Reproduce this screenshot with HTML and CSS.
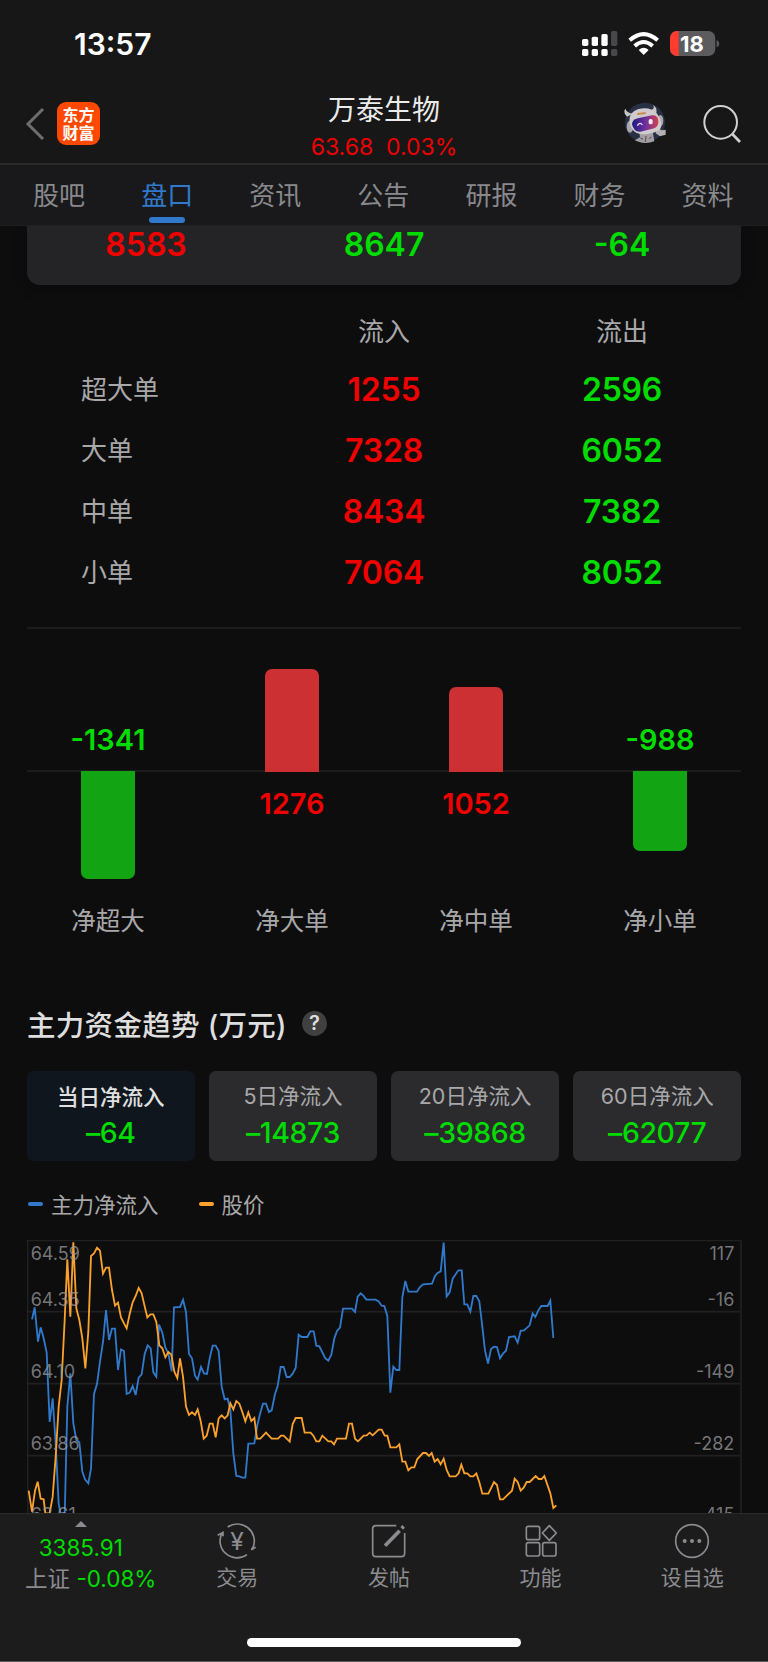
FILE: index.html
```html
<!DOCTYPE html>
<html lang="zh-CN">
<head>
<meta charset="UTF-8"/>
<title>万泰生物</title>
<link rel="stylesheet" href="styles.css">
</head>

<body>
<div class="page">
	<div class="status">
		<span class="time">13:57</span>
		<svg class="status-icons" viewBox="590 90 420 80">
			<g fill="#fff">
				<rect x="593" y="117" width="19" height="21" rx="5"/>
				<rect x="622" y="110" width="19" height="28" rx="5"/>
				<rect x="651" y="102" width="19" height="36" rx="5"/>
				<rect x="593" y="147" width="19" height="21" rx="5"/>
				<rect x="622" y="147" width="19" height="21" rx="5"/>
				<rect x="651" y="147" width="19" height="21" rx="5"/>
			</g>
			<g fill="#48484a">
				<rect x="680" y="93" width="19" height="45" rx="5"/>
				<rect x="680" y="147" width="19" height="21" rx="5"/>
			</g>
			<g fill="none" stroke="#fff" stroke-width="12">
				<path d="M736 121Q778 84 820 121"/>
				<path d="M751 138Q778 114 805 138"/>
			</g>
			<path fill="#fff" d="M763 150Q778 137 793 150L778 165Z"/>
			<rect x="857" y="93" width="136" height="75" rx="21" fill="#5c5c5e"/>
			<path fill="#ff3b30" d="M883 93H878A21 21 0 0 0 857 114V147A21 21 0 0 0 878 168H883Z"/>
			<path fill="#5c5c5e" d="M997 120Q1005 123 1005 131Q1005 139 997 142Z"/>
			<text class="battery" x="923" y="155" text-anchor="middle">18</text>
		</svg>
	</div>

	<div class="header">
		<svg class="back" viewBox="0 0 20 34"><path d="M18 2L3 17L18 32" fill="none" stroke="#6e6e70" stroke-width="3"/></svg>
		<div class="logo">东方<br/>财富</div>
		<div class="stock">
			<div class="stock-name">万泰生物</div>
			<div class="stock-price">63.68&nbsp; 0.03%</div>
		</div>
		<svg class="robot" viewBox="720 310 126 126">
			<circle cx="783" cy="372" r="60" fill="#273044"/>
			<path fill="#c9c4c5" d="M729 354Q716 342 724 330Q730 344 746 345ZM801 334Q814 331 807 320Q823 328 815 350Z"/>
			<path fill="#a39ea2" d="M766 400L806 398L811 428Q786 437 764 429L752 425L768 416Z"/>
			<path fill="#b5b0b4" d="M817 395L825 390L833 395L845 393V408L828 413L815 404Z"/>
			<ellipse cx="738" cy="384" rx="10" ry="18" fill="#aaa6ab"/>
			<ellipse cx="829" cy="366" rx="9" ry="17" fill="#aaa6ab"/>
			<path fill="#cfcacc" d="M736 370Q734 340 763 331Q800 322 820 346Q840 376 827 393Q806 407 771 407Q743 403 736 370Z"/>
			<path d="M760 346L785 343" stroke="#c98b50" stroke-width="6"/>
			<path fill="url(#visor)" d="M744 377Q744 364 761 359L804 350Q820 348 823 365Q825 384 811 389L769 399Q750 401 744 377Z"/>
			<path d="M760 381Q768 368 775 379" fill="none" stroke="#e8e4f4" stroke-width="4"/>
			<rect x="794" y="361" width="12" height="16" rx="5" fill="#f0e8f4"/>
			<path d="M786 412L784 430M769 418L777 422M801 414L796 421" stroke="#5a4f56" stroke-width="3"/>
			<defs>
				<linearGradient id="visor"><stop offset="0" stop-color="#1c1a7c"/><stop offset=".5" stop-color="#6d2fa0"/><stop offset="1" stop-color="#d4404f"/></linearGradient>
			</defs>
		</svg>
		<svg class="search" viewBox="950 305 126 126"><g fill="none" stroke="#d0d0d0" stroke-width="6"><circle cx="1009" cy="366" r="49"/><path d="M1044 401L1067 425" stroke-width="8"/></g></svg>
	</div>

	<ul class="tabs">
		<li>股吧</li>
		<li class="current">盘口</li>
		<li>资讯</li>
		<li>公告</li>
		<li>研报</li>
		<li>财务</li>
		<li>资料</li>
	</ul>

	<div class="content">
		<div class="total">
			<span class="red">8583</span>
			<span class="green">8647</span>
			<span class="green">-64</span>
		</div>

		<div class="flow">
			<div class="flow-row flow-head"><span></span><span>流入</span><span>流出</span></div>
			<div class="flow-row"><span class="name">超大单</span><b class="red">1255</b><b class="green">2596</b></div>
			<div class="flow-row"><span class="name">大单</span><b class="red">7328</b><b class="green">6052</b></div>
			<div class="flow-row"><span class="name">中单</span><b class="red">8434</b><b class="green">7382</b></div>
			<div class="flow-row"><span class="name">小单</span><b class="red">7064</b><b class="green">8052</b></div>
		</div>

		<div class="bars">
			<div class="half up">
				<div class="col"><b class="green">-1341</b></div>
				<div class="col"><i style="height:103px"></i></div>
				<div class="col"><i style="height:85px"></i></div>
				<div class="col"><b class="green">-988</b></div>
			</div>
			<div class="half down">
				<div class="col"><i style="height:108px"></i></div>
				<div class="col"><b class="red">1276</b></div>
				<div class="col"><b class="red">1052</b></div>
				<div class="col"><i style="height:80px"></i></div>
			</div>
			<div class="half names">
				<span>净超大</span><span>净大单</span><span>净中单</span><span>净小单</span>
			</div>
		</div>

		<div class="title">主力资金趋势 (万元)<span class="help">?</span></div>

		<div class="periods">
			<div class="period on"><span>当日净流入</span><em>–64</em></div>
			<div class="period"><span>5日净流入</span><em>–14873</em></div>
			<div class="period"><span>20日净流入</span><em>–39868</em></div>
			<div class="period"><span>60日净流入</span><em>–62077</em></div>
		</div>

		<div class="legend">
			<span class="main">主力净流入</span>
			<span class="price">股价</span>
		</div>

		<svg class="chart" viewBox="20 30 2145 819">
			<g class="grid">
				<path d="M21 31H2163M21 245H2163M21 461H2163M21 677H2163M22 30V849M2162 30V849"/>
			</g>
			<polyline class="line-main" points="35,268 43,232 53,335 61,292 70,325 79,368 88,576 97,505 106,640 115,820 122,860 133,860 141,530 150,430 159,580 168,630 177,637 186,725 194,748 204,760 212,716 221,492 230,462 239,395 248,336 257,240 266,330 275,296 284,296 293,420 302,358 311,363 319,492 328,488 337,468 346,495 355,443 364,433 373,372 382,346 391,355 399,427 408,440 416,284 426,308 435,352 444,370 454,424 461,232 479,231 488,209 497,246 506,372 515,385 524,437 532,449 542,411 551,430 560,432 568,385 577,347 586,347 595,363 604,470 613,508 622,506 630,540 639,670 648,738 657,739 666,743 675,743 684,641 702,640 711,585 720,548 728,521 737,521 746,546 754,541 764,492 772,468 781,411 790,411 799,441 808,441 817,431 826,414 835,314 844,321 861,321 870,304 880,304 888,347 897,349 915,385 924,392 933,374 942,325 950,303 959,293 968,236 995,236 1004,246 1012,200 1021,190 1029,197 1038,209 1066,209 1075,214 1084,227 1092,228 1101,258 1110,488 1119,410 1128,420 1137,420 1146,202 1155,153 1164,185 1190,185 1199,171 1208,163 1235,161 1244,138 1252,129 1261,124 1270,38 1279,199 1288,187 1297,146 1306,133 1314,121 1324,121 1332,223 1341,223 1350,245 1359,198 1368,198 1377,214 1386,290 1394,362 1403,401 1412,357 1421,350 1430,351 1439,385 1448,371 1457,362 1466,321 1483,319 1492,338 1501,302 1510,302 1528,286 1537,250 1545,261 1554,241 1563,228 1582,228 1590,212 1599,324"/>
			<polyline class="line-price" points="25,782 35,845 44,782 52,755 61,806 70,808 75,850 88,850 97,800 106,680 115,530 124,450 133,270 141,88 150,260 159,37 168,235 177,270 186,325 195,415 204,305 212,78 221,70 230,53 239,62 248,131 257,113 266,113 275,180 284,227 293,218 302,262 311,280 319,295 328,252 337,217 346,198 355,174 364,190 373,229 381,262 390,253 399,253 408,276 417,346 426,355 435,382 444,366 453,374 462,425 471,444 479,385 488,440 497,530 506,555 515,547 524,555 532,538 541,573 550,626 559,617 568,581 577,581 586,622 595,565 604,556 613,565 622,556 630,520 639,538 648,513 657,521 666,546 675,574 684,547 693,573 702,564 710,626 720,626 737,608 754,626 773,626 782,617 790,617 808,635 817,582 826,564 844,564 853,608 871,608 879,617 888,634 897,634 906,617 924,634 933,634 941,643 950,626 977,626 986,581 995,581 1004,626 1013,634 1030,617 1039,616 1048,608 1057,616 1075,599 1084,599 1093,617 1101,617 1110,652 1128,652 1137,643 1146,695 1155,695 1164,721 1173,712 1182,712 1191,687 1208,669 1217,669 1226,678 1234,669 1243,695 1252,687 1261,703 1270,686 1279,720 1288,739 1306,739 1315,730 1323,704 1332,730 1341,730 1350,739 1359,739 1368,730 1377,757 1386,791 1404,791 1421,756 1430,765 1439,808 1448,808 1475,782 1483,746 1492,756 1501,782 1510,773 1519,756 1528,756 1546,738 1555,747 1564,747 1572,738 1590,790 1599,834 1608,826"/>
			<g class="axis">
				<text x="31" y="89">64.59</text>
				<text x="31" y="229">64.35</text>
				<text x="31" y="444">64.10</text>
				<text x="31" y="659">63.86</text>
				<text x="31" y="874">63.61</text>
			</g>
			<g class="axis right">
				<text x="2142" y="89">117</text>
				<text x="2142" y="229">-16</text>
				<text x="2142" y="444">-149</text>
				<text x="2142" y="659">-282</text>
				<text x="2142" y="874">-415</text>
			</g>
		</svg>
	</div>

	<div class="footer">
		<div class="nav">
			<div class="index">
				<i class="arrow"></i>
				<div class="index-value">3385.91</div>
				<div class="index-name">上证 <span>-0.08%</span></div>
			</div>
			<div class="nav-item">
				<svg viewBox="0 0 126 126"><path d="M35 21A51 51 0 0 1 112 80L106 89L119 82M93 104A51 51 0 0 1 18 39M5 46L21 37V49"/><text x="63" y="89" text-anchor="middle">¥</text></svg>
				<span>交易</span>
			</div>
			<div class="nav-item">
				<svg viewBox="0 0 126 126"><path d="M85 17H24Q14 17 14 27V100Q14 110 24 110H100Q110 110 110 100V39"/><path class="pen" d="M51 77L95 32M101 25L107 19"/></svg>
				<span>发帖</span>
			</div>
			<div class="nav-item">
				<svg viewBox="0 0 126 126"><rect x="19" y="19" width="40" height="40" rx="6"/><rect x="19" y="68" width="40" height="40" rx="6"/><rect x="68" y="68" width="40" height="40" rx="6"/><path stroke-linejoin="round" d="M88 17L109 39L88 61L67 39Z"/></svg>
				<span>功能</span>
			</div>
			<div class="nav-item">
				<svg viewBox="0 0 126 126"><circle cx="63" cy="63" r="49"/><g class="dots"><circle cx="41" cy="63" r="6"/><circle cx="63" cy="63" r="6"/><circle cx="85" cy="63" r="6"/></g></svg>
				<span>设自选</span>
			</div>
		</div>
		<div class="home"></div>
	</div>
</div>
</body>
</html>
```
FILE: styles.css
```css
*{margin:0;padding:0;box-sizing:border-box}
body{background:#0d0d0d;font-family:Inter,"Noto Sans CJK SC",sans-serif;color:#a8a8aa;}
i,em{font-style:normal;}
b{font-weight:600;}
ul{list-style:none;}
svg{display:block;}
.red{color:#f00000;}
.green{color:#00dc00;}

.page{width:768px;height:1662px;display:flex;flex-direction:column;overflow:hidden;}

.status{height:90px;background:#171717;display:flex;justify-content:space-between;padding:28px 47px 0 74px;}
.time{font-size:30px;font-weight:600;line-height:32px;color:#fff;}
.status-icons{width:140px;height:26.67px;margin-top:2px;}
.battery{font-size:66px;font-weight:700;fill:#fff;}

.header{height:75px;background:#171717;border-bottom:2px solid #2a2a2b;display:flex;align-items:flex-start;padding:12px 25px 0 25px;}
.back{width:20px;height:34px;margin-top:5px;}
.logo{width:43px;height:43px;margin-left:12px;padding-top:4px;border-radius:9px;background:#ff4800;color:#fff;font-size:16px;font-weight:700;line-height:18px;text-align:center;}
.stock{width:200px;margin:-12px 0 0 184px;text-align:center;}
.stock-name{font-size:28px;line-height:41px;color:#ebebeb;}
.stock-price{font-size:23px;line-height:32px;color:#f00000;}
.robot{width:42px;height:42px;margin-left:140px;}
.search{width:42px;height:42px;margin-left:35px;}

.tabs{height:61px;background:#19191b;border-bottom:1px solid #1f1f21;display:grid;grid-template-columns:repeat(7,108.1px);padding-left:5px;}
.tabs li{display:flex;flex-direction:column;align-items:center;height:60px;font-size:26px;line-height:62px;color:#88888d;}
.tabs .current{color:#3079cb;}
.tabs .current:after{content:"";width:36px;height:6px;margin-top:-10px;flex:none;border-radius:3px;background:#3079cb;}

.content{flex:1;overflow:hidden;padding:0 27px;}
.total{height:59px;border-radius:0 0 13px 13px;background:#242427;display:grid;grid-template-columns:repeat(3,1fr);text-align:center;font-size:32px;font-weight:600;line-height:38px;box-shadow:0 4px 14px rgba(0,0,0,.3);}

.flow{height:344px;padding-top:16px;border-bottom:2px solid #1c1c1d;}
.flow-row{height:61px;display:grid;grid-template-columns:repeat(3,1fr);text-align:center;font-size:26px;line-height:62px;}
.flow-row b{font-size:32px;letter-spacing:-.2px;}
.flow-head{height:58px;line-height:62px;}
.flow-row .name{text-align:left;padding-left:54px;}

.bars{height:310px;padding-top:36px;}
.half{display:grid;grid-template-columns:repeat(4,184px);margin:0 -11px;text-align:center;}
.up,.down{grid-template-columns:173px 184px 184px 173px;margin:0;}
.up{height:107px;border-bottom:2px solid #1c1c1d;}
.col{display:flex;flex-direction:column;align-items:center;}
.col:first-child{padding-right:11px;}
.col:last-child{padding-left:11px;}
.col b{font-size:29px;line-height:34px;}
.col i{display:block;width:54px;flex:none;}
.up .col{justify-content:flex-end;}
.up b{margin-bottom:13px;}
/* bars sit on the zero line, over its border */
.up i{margin-bottom:-2px;background:#cd3032;border-radius:7px 7px 0 0;}
.down{height:133px;}
.down b{margin-top:15px;}
.down i{margin-top:-1px;background:#12a412;border-radius:0 0 7px 7px;}
.names{font-size:24.5px;line-height:32px;}

.title{height:60px;display:flex;align-items:center;margin-top:54px;font-size:28.5px;font-weight:500;letter-spacing:.3px;color:#dedede;}
.help{width:25px;height:25px;margin-left:15px;border-radius:50%;background:#404041;font-size:20px;font-weight:600;line-height:25px;letter-spacing:0;text-align:center;}

.periods{display:grid;grid-template-columns:repeat(4,1fr);gap:14.6px;margin-top:18px;}
.period{height:90px;border-radius:7px;background:#2b2b2d;text-align:center;padding-top:9px;}
.period span{display:block;font-size:21.5px;line-height:32px;}
.period em{display:block;font-size:28.5px;font-weight:500;letter-spacing:-.4px;line-height:42px;color:#00dc00;}
.on{background:#0f161e;}
.on span{color:#e0e0e0;font-weight:500;}
.period.on span{padding-top:1px;margin-bottom:-1px;}

.legend{height:79px;display:flex;align-items:center;gap:40px;padding:6px 0 0 1px;font-size:21.5px;}
.legend span{display:flex;align-items:center;}
.legend span:before{content:"";width:15px;height:4px;margin-right:8px;border-radius:2px;background:#3079cb;}
.legend .price:before{background:#f9a12c;}

.chart{width:715px;height:273px;}
.grid path{fill:none;stroke:#202021;stroke-width:5;}
.axis{font-size:54px;fill:#9a9a9e;fill-opacity:.75;}
.right{text-anchor:end;}
.line-main,.line-price{fill:none;stroke-width:5.5;}
.line-main{stroke:#3079cb;}
.line-price{stroke:#f9a12c;}

.footer{height:149px;background:#1c1c1c;border-top:1px solid #2a2a2a;border-bottom:1px solid #5a5a5a;}
.nav{height:124px;display:grid;grid-template-columns:161.5px repeat(4,151.65px);color:#8b8b90;}
.index{padding-top:7px;display:flex;flex-direction:column;align-items:center;}
.arrow{border:6px solid transparent;border-top:0;border-bottom-color:#8b8b90;}
.index-value{font-size:22.5px;line-height:30px;margin-top:6px;color:#00dc00;}
.index-name{font-size:22.5px;line-height:32px;margin-left:20px;white-space:nowrap;}
.index-name span{color:#00dc00;}
.nav-item{display:flex;flex-direction:column;align-items:center;padding-top:6px;font-size:21px;line-height:32px;}
.nav-item svg{width:42px;height:42px;fill:none;stroke:#8b8b90;stroke-width:5;}
.nav-item text{font-size:74px;fill:#8b8b90;stroke:none;}
.nav-item .pen{stroke-width:11;}
.nav-item .dots{fill:#8b8b90;stroke:none;}
.home{width:274px;height:9px;margin:0 auto;border-radius:5px;background:#fff;}
```
